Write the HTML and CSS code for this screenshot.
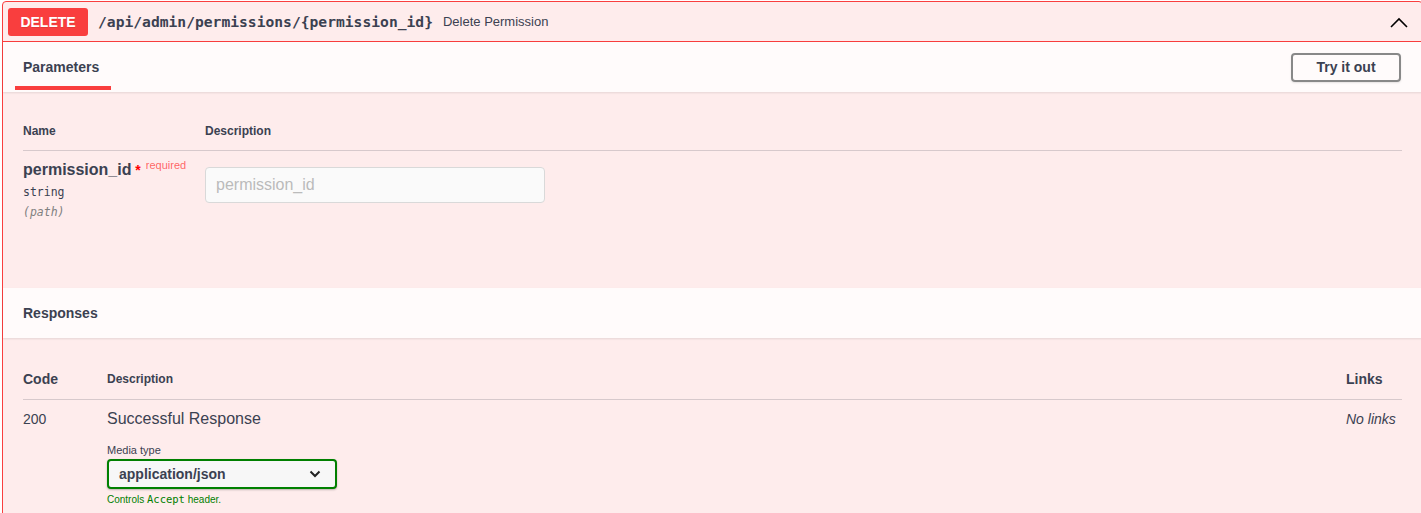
FILE: index.html
```html
<!DOCTYPE html>
<html lang="en">
<head>
    <meta charset="UTF-8">
    <title>Delete Permission</title>
    <link rel="stylesheet" href="styles.css">
</head>
<body>
    <div class="opblock">
        <div class="summary">
            <span class="method">DELETE</span>
            <span class="path">/api/admin/permissions/{permission_id}</span>
            <span class="summary-desc">Delete Permission</span>
            <svg class="arrow" width="20" height="20" viewBox="0 0 20 20">
                <path d="M2 15 L10 7 L18 15" fill="none" stroke="#000" stroke-width="1.6"/>
            </svg>
        </div>

        <div class="section-header">
            <div class="tab-item"><h4>Parameters</h4></div>
            <button class="try-out">Try it out</button>
        </div>

        <div class="params">
            <div class="params-head">
                <div class="col-name">Name</div>
                <div>Description</div>
            </div>
            <div class="param-row">
                <div class="col-name">
                    <div class="param-name">permission_id<span class="star">&nbsp;*</span><span class="req">required</span></div>
                    <div class="param-type">string</div>
                    <div class="param-in">(path)</div>
                </div>
                <div>
                    <input type="text" class="param-input" placeholder="permission_id">
                </div>
            </div>
        </div>

        <div class="section-header responses-header">
            <h4>Responses</h4>
        </div>

        <div class="responses">
            <div class="resp-head">
                <div class="col-code">Code</div>
                <div class="col-desc">Description</div>
                <div class="col-links">Links</div>
            </div>
            <div class="resp-row">
                <div class="col-code status">200</div>
                <div class="col-desc">
                    <div class="resp-desc">Successful Response</div>
                    <div class="media-label">Media type</div>
                    <div class="select">
                        <span>application/json</span>
                        <svg width="12" height="8" viewBox="0 0 12 8">
                            <path d="M1.5 1.5 L6 6 L10.5 1.5" fill="none" stroke="#222" stroke-width="2"/>
                        </svg>
                    </div>
                    <div class="media-hint">Controls <code>Accept</code> header.</div>
                </div>
                <div class="col-links no-links">No links</div>
            </div>
        </div>
    </div>
</body>
</html>
```

FILE: styles.css
```css
body {
    margin: 0;
    padding: 0;
    background-color: #FFFFFF;
    color: #3b4151;
    font-family: "Liberation Sans", Arial, sans-serif;
    overflow: hidden;
}

.opblock {
    margin: 1px -2px 0 2px;
    border: 1px solid #f93e3e;
    border-radius: 4px;
    background-color: #feecec;
    height: 600px;
}

.summary {
    display: flex;
    align-items: center;
    height: 39px;
    padding: 0 5px;
    border-bottom: 1px solid #f93e3e;
}

.method {
    background-color: #f93e3e;
    color: #FFFFFF;
    font-size: 14px;
    font-weight: bold;
    width: 80px;
    height: 28px;
    line-height: 28px;
    text-align: center;
    border-radius: 3px;
    text-shadow: 0 1px 0 rgba(0, 0, 0, .1);
}

.path {
    font-family: "DejaVu Sans Mono", monospace;
    font-size: 14.65px;
    font-weight: bold;
    padding: 0 10px;
}

.summary-desc {
    font-size: 13px;
    flex: 1;
}

.arrow {
    margin-right: 8px;
}

.section-header {
    display: flex;
    align-items: center;
    justify-content: space-between;
    height: 50px;
    padding: 0 20px;
    background-color: #fffbfb;
    box-shadow: 0 1px 2px rgba(0, 0, 0, .1);
}

.section-header h4 {
    margin: 0;
    font-size: 14px;
    font-weight: bold;
}

.tab-item {
    position: relative;
}

.tab-item h4::after {
    content: "";
    position: absolute;
    left: -8px;
    right: -12px;
    bottom: -15px;
    height: 4px;
    background-color: #f93e3e;
}

.try-out {
    font-family: "Liberation Sans", Arial, sans-serif;
    font-size: 14px;
    font-weight: bold;
    color: #3b4151;
    background: transparent;
    border: 2px solid #888888;
    border-radius: 4px;
    height: 29px;
    width: 110px;
    margin-right: 1px;
    box-shadow: 0 1px 2px rgba(0, 0, 0, .1);
}

.params {
    height: 176px;
    padding: 20px 20px 0 20px;
}

.params-head {
    display: flex;
    font-size: 12px;
    font-weight: bold;
    padding: 12px 0;
    height: 14px;
    border-bottom: 1px solid rgba(59, 65, 81, .2);
}

.col-name {
    width: 182px;
}

.param-row {
    display: flex;
    padding-top: 10px;
}

.param-name {
    font-size: 16px;
    font-weight: bold;
    line-height: 18px;
}

.star {
    color: red;
    font-size: 14px;
}

.req {
    color: rgba(255, 0, 0, .6);
    font-size: 11px;
    font-weight: normal;
    position: relative;
    top: -6px;
    margin-left: 5px;
}

.param-type {
    font-family: "DejaVu Sans Mono", monospace;
    font-size: 11.5px;
    margin-top: 5px;
}

.param-in {
    font-family: "DejaVu Sans Mono", monospace;
    font-size: 11.5px;
    font-style: italic;
    color: gray;
    margin-top: 6px;
}

.param-input {
    box-sizing: border-box;
    width: 340px;
    height: 36px;
    margin-top: 6px;
    padding: 8px 10px;
    font-family: "Liberation Sans", Arial, sans-serif;
    font-size: 16px;
    background-color: #fafafa;
    border: 1px solid #d9d9d9;
    border-radius: 4px;
}

.param-input::placeholder {
    color: #bbbbbb;
}

.responses {
    padding: 20px;
}

.resp-head,
.resp-row {
    display: flex;
}

.resp-head {
    align-items: center;
    height: 41px;
    border-bottom: 1px solid rgba(59, 65, 81, .2);
    font-weight: bold;
    font-size: 14px;
}

.resp-head .col-desc {
    font-size: 12px;
}

.col-code {
    width: 84px;
}

.col-desc {
    flex: 1;
}

.col-links {
    width: 56px;
}

.resp-row {
    padding-top: 10px;
}

.status {
    font-size: 14px;
    line-height: 18px;
}

.resp-desc {
    font-size: 16px;
    line-height: 18px;
}

.media-label {
    font-size: 11px;
    margin-top: 16px;
}

.select {
    box-sizing: border-box;
    display: flex;
    align-items: center;
    justify-content: space-between;
    width: 230px;
    height: 30px;
    margin-top: 3px;
    padding: 0 14px 0 10px;
    font-size: 14px;
    font-weight: bold;
    color: #3b4151;
    background-color: #f7f7f7;
    border: 2px solid green;
    border-radius: 4px;
    box-shadow: 0 1px 2px rgba(0, 0, 0, .25);
}

.media-hint {
    color: green;
    font-size: 10px;
    margin-top: 4px;
}

.media-hint code {
    font-family: "DejaVu Sans Mono", monospace;
    font-size: 10.5px;
}

.no-links {
    font-size: 14px;
    font-style: italic;
    line-height: 18px;
}
```
